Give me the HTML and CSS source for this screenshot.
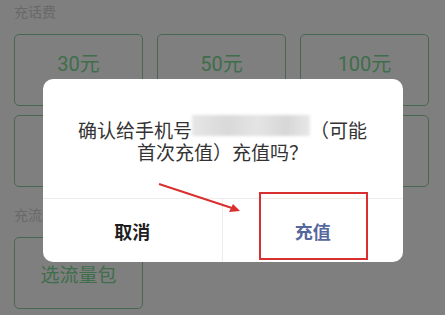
FILE: index.html
```html
<!DOCTYPE html>
<html lang="zh-CN">

<head>
    <meta charset="UTF-8">
    <meta name="viewport" content="width=device-width, initial-scale=1.0">
    <title>充话费</title>
    <link rel="stylesheet" href="styles.css">
</head>

<body>
    <div class="page">
        <div class="section-title">充话费</div>
        <div class="cards">
            <div class="card">30元</div>
            <div class="card">50元</div>
            <div class="card">100元</div>
            <div class="card">200元</div>
            <div class="card">300元</div>
            <div class="card">500元</div>
        </div>
        <div class="section-title second">充流量</div>
        <div class="cards">
            <div class="card single">选流量包</div>
        </div>
    </div>

    <div class="mask">
        <div class="dialog">
            <div class="dialog-msg">
                确认给手机号<span class="phone"></span>（可能首次充值）充值吗？
            </div>
            <div class="dialog-btns">
                <div class="btn cancel">取消</div>
                <div class="btn ok">充值</div>
            </div>
            <!-- annotation -->
            <div class="mark"></div>
            <svg class="arrow" width="100" height="40" viewBox="0 0 100 40">
                <line x1="3" y1="3" x2="82" y2="29" stroke="#d9302f" stroke-width="2" />
                <polygon points="84,30 73,31 77,23" fill="#d9302f" />
            </svg>
        </div>
    </div>
</body>

</html>
```

FILE: styles.css
```css
body {
    margin: 0;
    background: #fff;
    font-family: "Roboto", "Noto Sans CJK SC", sans-serif;
}

.page {
    padding: 4px 16px 0 14px;
}

.section-title {
    font-size: 14px;
    line-height: 16px;
    color: #d2d2d2;
    margin-bottom: 14px;
}

.section-title.second {
    margin-top: 20px;
}

.cards {
    display: grid;
    grid-template-columns: repeat(3, 1fr);
    column-gap: 14px;
    row-gap: 9px;
}

.card {
    height: 70px;
    border: 1px solid #8fd1a0;
    border-radius: 5px;
    display: flex;
    justify-content: center;
    align-items: flex-start;
    padding-top: 17px;
    box-sizing: border-box;
    height: 72px;
    font-size: 20px;
    line-height: 24px;
    color: #7edc98;
}

.card.single {
    align-items: center;
    padding-top: 2px;
    font-size: 19px;
    font-family: "Noto Sans CJK SC", sans-serif;
}

/* dim layer + dialog */
.mask {
    position: fixed;
    inset: 0;
    background: rgba(0, 0, 0, 0.5);
    display: flex;
    justify-content: center;
    align-items: flex-start;
    padding-top: 79px;
}

.dialog {
    position: relative;
    width: 360px;
    background: #fff;
    border-radius: 10px;
    font-family: "Noto Sans CJK SC", sans-serif;
}

.dialog-msg {
    padding: 40px 33px 35px;
    font-size: 19px;
    line-height: 22px;
    color: #333;
    text-align: center;
}

.phone {
    display: inline-block;
    width: 118px;
    height: 21px;
    vertical-align: top;
    margin-top: -4px;
    background: linear-gradient(90deg, #e6e6e6, #d9d9d9 30%, #e4e4e4 55%, #d7d7d7 80%, #e8e8e8);
    filter: blur(1.5px);
}

.dialog-btns {
    display: flex;
    border-top: 1px solid #ededed;
}

.btn {
    flex: 1;
    height: 63px;
    display: flex;
    align-items: center;
    justify-content: center;
    font-size: 18px;
    font-weight: bold;
}

.cancel {
    color: #1e1e1e;
    border-right: 1px solid #ededed;
}

.ok {
    color: #56679b;
}

.mark {
    position: absolute;
    left: 216px;
    top: 113px;
    width: 105px;
    height: 64px;
    border: 2px solid #d9302f;
}

.arrow {
    position: absolute;
    left: 113px;
    top: 102px;
}
```
